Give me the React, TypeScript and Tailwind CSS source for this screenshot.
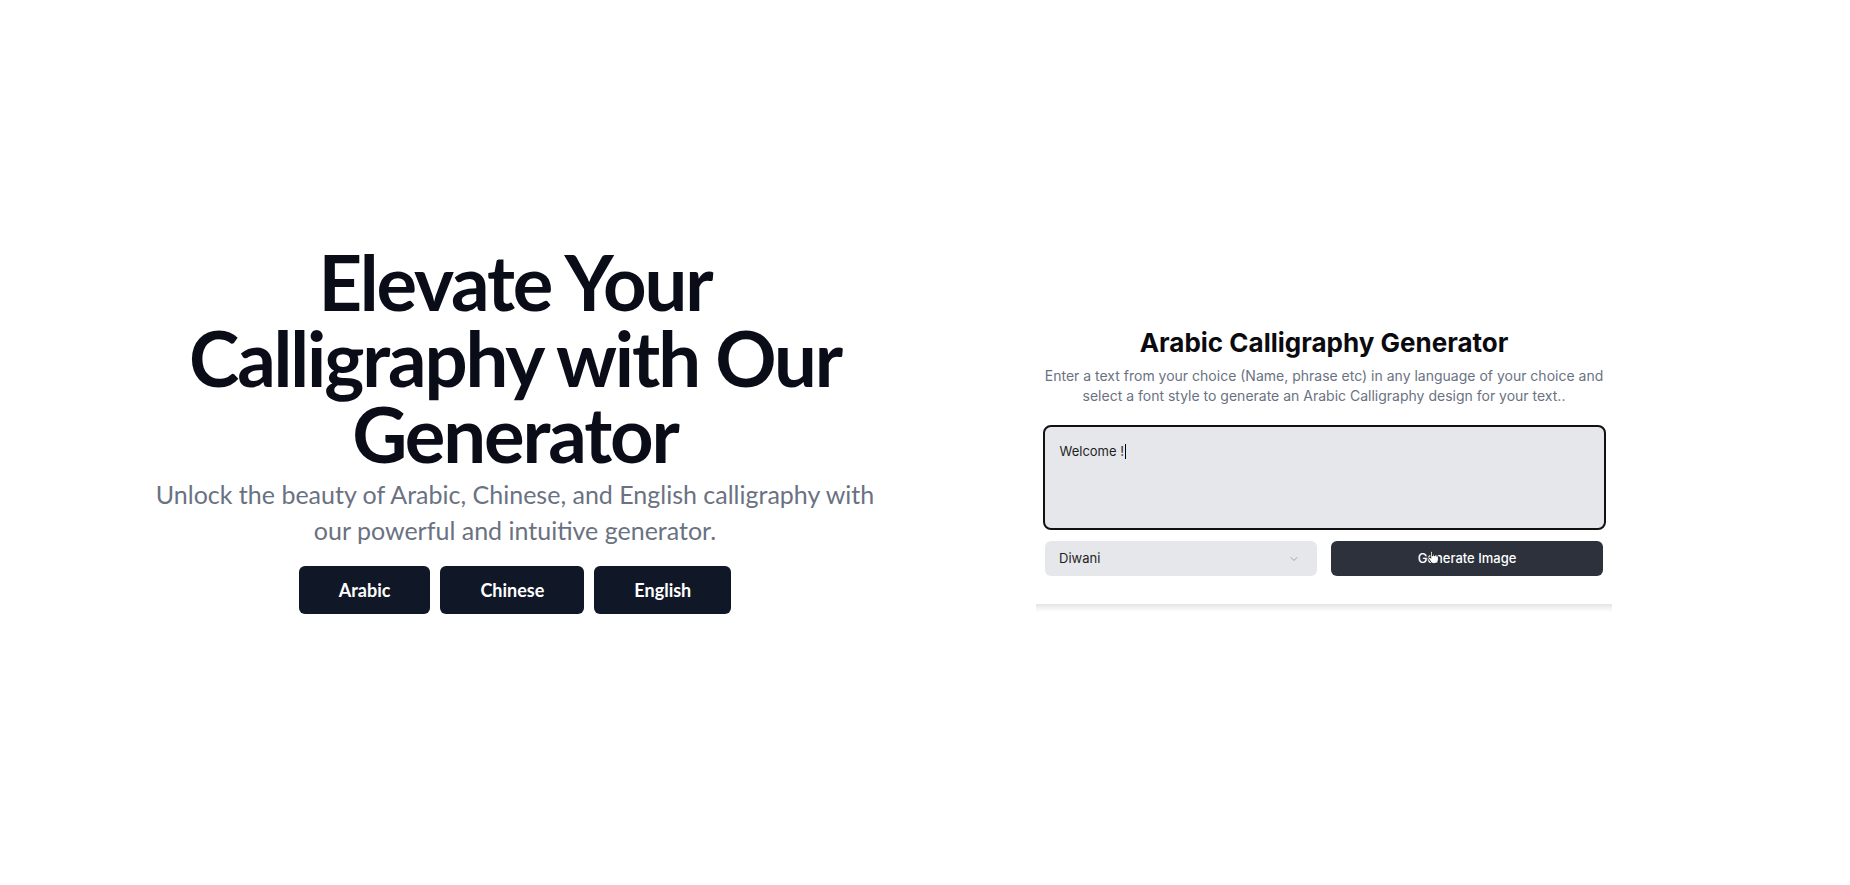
import React from 'react'
import { ChevronDown } from 'lucide-react'

const hero = { fontFamily: "Lato, 'Open Sans', sans-serif" }
const app = { fontFamily: "Inter, 'Noto Sans', sans-serif" }

function HandCursor() {
  return (
    <svg width="12" height="15" viewBox="0 0 16 18" className="absolute left-[96px] top-[9px]">
      <path
        d="M5 1.8a1.2 1.2 0 0 1 2.4 0V7h.4V5.6a1.2 1.2 0 0 1 2.4 0V7h.4V6.2a1.2 1.2 0 0 1 2.4 0V7.4a1.2 1.2 0 0 1 2.2.6v3.8c0 3-2 5.2-4.8 5.2H8.6c-1.4 0-2.5-.6-3.3-1.7L2.1 10.4a1.2 1.2 0 0 1 1.8-1.5L5 10z"
        fill="#fff"
        stroke="#111"
        strokeWidth="1.1"
        strokeLinejoin="round"
      />
    </svg>
  )
}

export default function App() {
  const languages = ['Arabic', 'Chinese', 'English']

  return (
    <div className="min-h-screen bg-white">
      <div className="mx-auto grid w-[1620px] grid-cols-2 items-start pt-[244px]">
        {/* hero copy */}
        <div className="flex flex-col items-center pr-[10px] text-center" style={hero}>
          <h1 className="text-[76px] font-bold leading-[76px] tracking-[-0.028em] text-[#0a0d17]">
            <span className="block">Elevate Your</span>
            <span className="block">Calligraphy with Our</span>
            <span className="block">Generator</span>
          </h1>
          <p className="mt-[4px] max-w-[745px] text-[25px] leading-9 text-gray-500">
            Unlock the beauty of Arabic, Chinese, and English calligraphy with our powerful and intuitive generator.
          </p>
          <div className="mt-[18px] flex gap-[10px]">
            {languages.map((l) => (
              <button
                key={l}
                className="rounded-md bg-gray-900 px-10 py-2.5 text-lg font-bold leading-7 text-white"
              >
                {l}
              </button>
            ))}
          </div>
        </div>

        {/* generator preview */}
        <div className="flex justify-center pr-3 pt-[81px]" style={app}>
          <div className="flex w-[563px] flex-col items-center">
            <h2 className="pt-[2px] text-[26px] font-bold leading-8 text-[#0b0b0f]">Arabic Calligraphy Generator</h2>
            <p className="mt-[7px] w-[600px] text-center text-[14px] leading-5 text-gray-500">
              Enter a text from your choice (Name, phrase etc) in any language of your choice and select a font style to
              generate an Arabic Calligraphy design for your text..
            </p>
            <div className="mt-[19px] h-[105px] w-full rounded-lg border-2 border-[#111] bg-gray-200 px-[15px] pt-[14px] text-[13px] leading-5 text-[#1f1f1f]">
              Welcome !<span className="ml-px inline-block h-[15px] w-px translate-y-[3px] bg-black" />
            </div>
            <div className="mt-[11px] grid w-[558px] grid-cols-2 gap-[14px]">
              <div className="flex h-[35px] items-center justify-between rounded-md bg-gray-200 pl-[14px] pr-[17px] text-[13px] text-[#1f1f1f]">
                <span>Diwani</span>
                <ChevronDown size={12} className="text-gray-400" />
              </div>
              <button className="relative flex h-[35px] items-center justify-center rounded-md bg-[#2c313c] text-[13px] font-medium text-white">
                Generate Image
                <HandCursor />
              </button>
            </div>
            <div className="mt-[28px] h-[8px] w-[576px] bg-linear-to-b from-[#e4e4e4] to-white" />
          </div>
        </div>
      </div>
    </div>
  )
}
